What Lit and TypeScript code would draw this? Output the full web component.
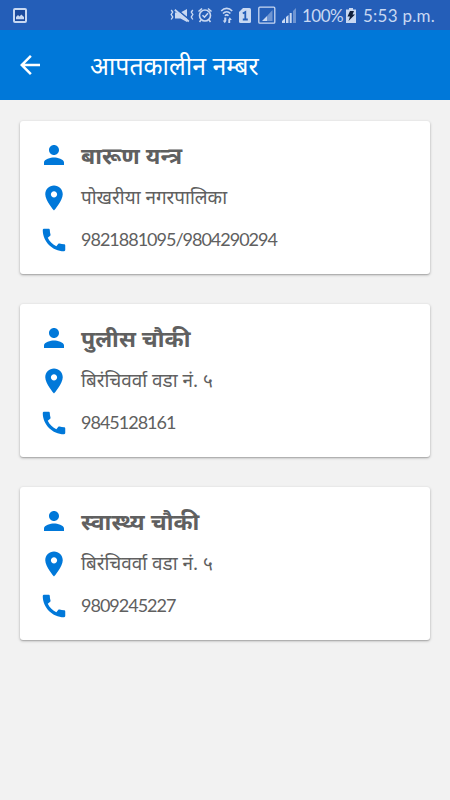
import { LitElement, html, css, svg } from "lit";
import { customElement, property } from "lit/decorators.js";

const PERSON = "M12 12c2.21 0 4-1.79 4-4s-1.79-4-4-4-4 1.79-4 4 1.79 4 4 4zm0 2c-2.67 0-8 1.34-8 4v2h16v-2c0-2.66-5.33-4-8-4z";
const PLACE = "M12 2C8.13 2 5 5.13 5 9c0 5.25 7 13 7 13s7-7.75 7-13c0-3.87-3.13-7-7-7zm0 9.5c-1.38 0-2.5-1.12-2.5-2.5s1.12-2.5 2.5-2.5 2.5 1.12 2.5 2.5-1.12 2.5-2.5 2.5z";
const CALL = "M20.01 15.38c-1.23 0-2.42-.2-3.53-.56-.35-.12-.74-.03-1.01.24l-1.57 1.97c-2.83-1.35-5.48-3.9-6.89-6.83l1.95-1.66c.27-.28.35-.67.24-1.02-.37-1.11-.56-2.3-.56-3.53 0-.54-.45-.99-.99-.99H4.19C3.65 3 3 3.24 3 3.99 3 13.28 10.73 21 20.01 21c.71 0 .99-.63.99-1.18v-3.45c0-.54-.45-.99-.99-.99z";
const BACK = "M20 11H7.83l5.59-5.59L12 4l-8 8 8 8 1.41-1.41L7.83 13H20v-2z";

interface Contact { name: string; place: string; phone: string; }

const CONTACTS: Contact[] = [
  { name: "बारूण यन्त्र", place: "पोखरीया नगरपालिका", phone: "9821881095/9804290294" },
  { name: "पुलीस चौकी", place: "बिरंचिवर्वा वडा नं. ५", phone: "9845128161" },
  { name: "स्वास्थ्य चौकी", place: "बिरंचिवर्वा वडा नं. ५", phone: "9809245227" },
];

const icon = (d: string) => html`<svg class="icon" viewBox="0 0 24 24">${svg`<path d=${d}></path>`}</svg>`;

@customElement("status-bar")
export class StatusBar extends LitElement {
  static styles = css`
    :host { display: flex; align-items: center; height: 30px; background: #245eb8; color: #c8d8f2; padding: 0 14px 0 12px; box-sizing: border-box;
      font-family: "Lato", "Noto Sans", sans-serif; font-size: 17px; white-space: pre; }
    svg { display: block; flex: none; fill: none; stroke: currentColor; }
    .solid { fill: currentColor; stroke: none; }
    .dim { fill: #6f95d2; stroke: none; }
    .ink { fill: #10203c; stroke: none; }
    .well { fill: #1c4a9c; }
    .cut { stroke: #245eb8; }
    .spacer { flex: 1; }
    .percent { width: 41px; margin-left: 5px; letter-spacing: -0.5px; }
    .battery { margin: 0 7px 0 3px; }
    .time { width: 73px; letter-spacing: 0.25px; }
    .percent, .time { line-height: 30px; padding-top: 2px; }
    .mute { margin-right: 3px; }
    .alarm { margin-right: 7px; }
    .wifi { margin-right: 5px; }
    .sim { margin-right: 7px; }
    .boxed { margin-right: 5px; }
  `;
  render() {
    return html`
      <svg width="16" height="18" viewBox="0 0 16 18">
        <rect class="well" x="2" y="3" width="12" height="13" rx="1" stroke-width="2"></rect>
        <path class="solid" d="M4 13.300V11l2-2 1.500 1.400L9.300 8.600 12 11v2.300z"></path>
      </svg>
      <span class="spacer"></span>
      <svg class="mute" width="24" height="18" viewBox="0 0 24 18">
        <path d="M1.200 4l1.500 2-1.500 2.500 1.500 2.500-1.500 2.500M22.800 4l-1.500 2 1.500 2.500-1.500 2.500 1.500 2.500" stroke-width="1.400"></path>
        <path class="solid" d="M5 6.500h5.500L17 3v13l-6.500-3.500H5z"></path>
        <path class="cut" d="M6.200 2.800l14 11.500" stroke-width="1.500"></path>
        <path d="M4.800 3.800l14 11.700" stroke-width="1.800"></path>
      </svg>
      <svg class="alarm" width="16" height="18" viewBox="0 0 16 18">
        <circle cx="8" cy="9.500" r="5.500" stroke-width="1.600"></circle>
        <path d="M1.500 5.500L5 2.500M14.500 5.500L11 2.500M4 14l-1.500 2M12 14l1.500 2M5.500 9.200l2 2 3.500-4" stroke-width="1.600"></path>
      </svg>
      <svg class="wifi" width="14" height="18" viewBox="0 0 14 18">
        <path d="M1.200 5c3.200-3.500 7.800-3.500 11 0M3 7.500c2.200-2.400 5.200-2.400 7.400 0M4.900 9.800c1.100-1.200 2.500-1.200 3.600 0" stroke-width="1.600"></path>
        <path class="solid" d="M4.200 11.500v3h-1.500l2.100 2.700 1.500-2.200v-3.500zM8.300 17v-3.500l1.500-2.200 2 2.700h-1.600v3z"></path>
      </svg>
      <svg class="sim" width="12" height="18" viewBox="0 0 12 18">
        <path class="solid" d="M4 2h6.500Q12 2 12 3.500v12Q12 17 10.500 17h-9Q0 17 0 15.500V6z"></path>
        <path class="cut" d="M3.800 7.500L6.300 6V13.500M3.800 13.500h5" stroke-width="1.800"></path>
      </svg>
      <svg class="boxed" width="18" height="18" viewBox="0 0 18 18">
        <rect x="0.800" y="1.200" width="16" height="16" rx="1" stroke-width="1.300"></rect>
        <path class="dim" d="M9 10l5.500-6v11H9z"></path><path class="solid" d="M4 15l5-5v5z"></path>
      </svg>
      <svg width="16" height="18" viewBox="0 0 16 18">
        <path class="solid" d="M1 17v-2l3-3v5zM5 17v-6l2.500-2v8z"></path>
        <path d="M9.700 17V7" stroke-width="2"></path>
        <path class="dim" d="M12 17V5l3-3v15z"></path>
      </svg>
      <span class="percent">100%</span>
      <svg class="battery" width="10" height="18" viewBox="0 0 10 18">
        <path class="solid" d="M3 2h4v1.500h3V17H0V3.500h3z"></path>
        <path class="ink" d="M4 5h4L6.500 8.500H9L2.500 15 4 10.500H1.500z"></path>
      </svg>
      <span class="time">5:53 p.m.</span>`;
  }
}

@customElement("contact-card")
export class ContactCard extends LitElement {
  @property({ attribute: false }) contact!: Contact;
  static styles = css`
    :host { display: grid; grid-template-rows: 42px 43px 42px; height: 153px; padding: 13px 19px; box-sizing: border-box;
      background: #fff; border-radius: 3px; box-shadow: 0 1px 3px rgba(0,0,0,.28), 0 1px 1px rgba(0,0,0,.12); color: #606060;
      font-family: "Noto Sans", sans-serif; }
    .row { display: flex; align-items: center; white-space: nowrap; }
    .icon { width: 30px; height: 30px; margin-right: 12px; fill: #0078d9; flex: none; }
    .name { font-weight: 700; font-size: 23px; }
    .place { font-size: 18.9px; padding-bottom: 2px; }
    .phone { font-size: 18px; letter-spacing: -1px; padding-bottom: 3px; font-family: "Lato", sans-serif; }
  `;
  render() {
    return html`
      <div class="row">${icon(PERSON)}<span class="name">${this.contact.name}</span></div>
      <div class="row">${icon(PLACE)}<span class="place">${this.contact.place}</span></div>
      <div class="row">${icon(CALL)}<span class="phone">${this.contact.phone}</span></div>`;
  }
}

@customElement("app-root")
export class AppRoot extends LitElement {
  static styles = css`
    :host { display: block; min-height: 800px; background: #f2f2f2; }
    .bar { display: flex; align-items: center; height: 70px; padding-left: 15px; box-sizing: border-box; background: #0078d9; color: #fff; }
    .icon { width: 30px; height: 30px; fill: #fff; flex: none; }
    .title { margin-left: 45px; font: 24.8px "Noto Sans", sans-serif; white-space: nowrap; }
    .list { display: flex; flex-direction: column; gap: 30px; padding: 21px 20px; }
  `;
  render() {
    return html`
      <status-bar></status-bar>
      <header class="bar">${icon(BACK)}<span class="title">आपतकालीन नम्बर</span></header>
      <main class="list">${CONTACTS.map((c) => html`<contact-card .contact=${c}></contact-card>`)}</main>`;
  }
}
